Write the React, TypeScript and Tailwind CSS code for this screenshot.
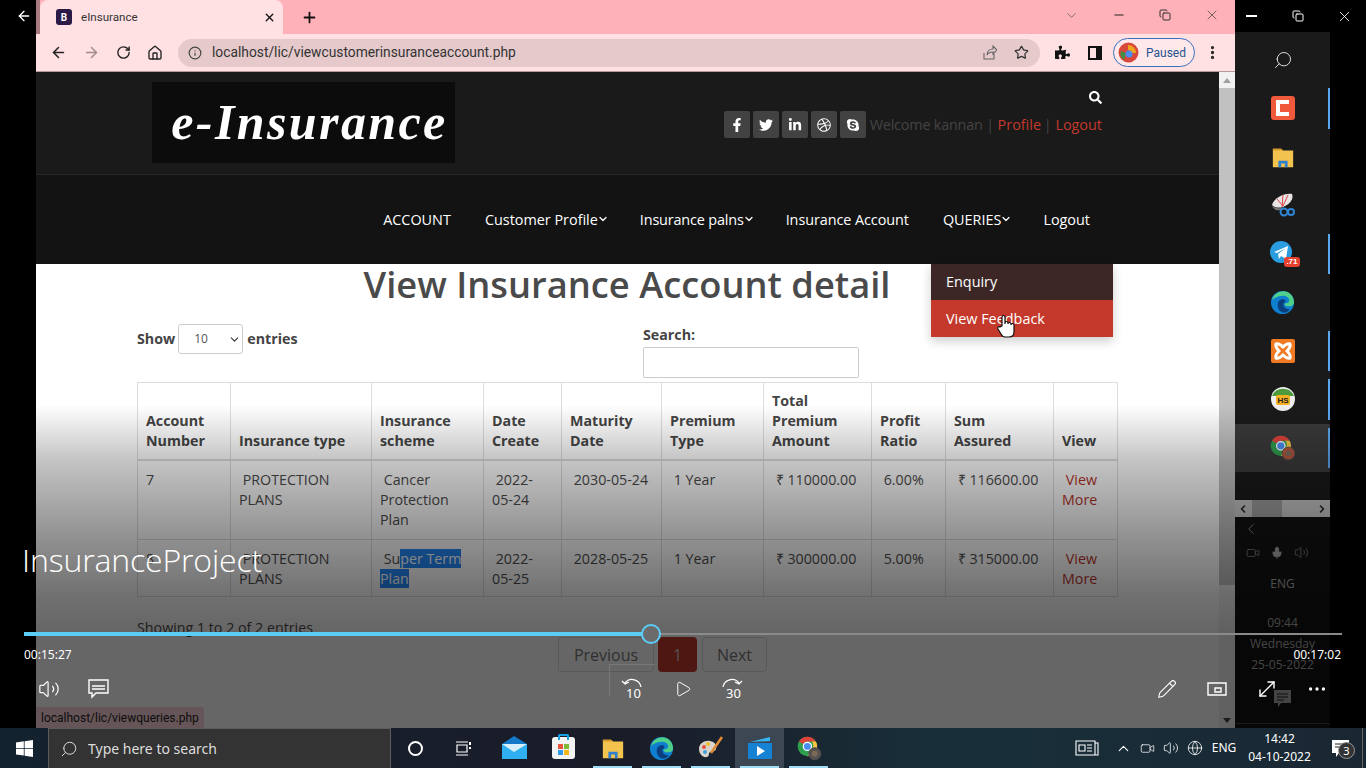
import React from "react";
import { ArrowLeft, ArrowRight, RotateCw, Home, Info, Star, ChevronDown, ChevronLeft, ChevronRight, X, Plus, Minus, Copy, Search, Volume2, Play, Pencil, MoveDiagonal, Ellipsis, ChevronUp, Video, Globe, Mic, EllipsisVertical } from "lucide-react";
import { FaFacebookF, FaTwitter, FaLinkedinIn, FaDribbble, FaSkype, FaSearch, FaPuzzlePiece } from "react-icons/fa";

const open = "font-['Open_Sans',sans-serif]";

function Chrome({ size = 30, badge = "#b8543a" }: { size?: number; badge?: string }) {
  return (
    <svg width={size} height={size} viewBox="0 0 32 32">
      <circle cx="14" cy="14" r="12" fill="#2f9e4f" />
      <path d="M14 2a12 12 0 0 1 10.4 6H14a6 6 0 0 0-5.2 3L3.6 8A12 12 0 0 1 14 2z" fill="#e0413a" />
      <path d="M24.4 8A12 12 0 0 1 14 26l5.2-9a6 6 0 0 0 0-9z" fill="#f6c343" />
      <circle cx="14" cy="14" r="5" fill="#4a8df0" stroke="#fff" strokeWidth="1.5" />
      <circle cx="23" cy="23" r="7.5" fill={badge} stroke="#555" />
      <circle cx="23" cy="23" r="3.5" fill="#7b6a58" />
    </svg>
  );
}
function Edge({ size = 26 }: { size?: number }) {
  return (
    <svg width={size} height={size} viewBox="0 0 26 26">
      <circle cx="13" cy="13" r="12" fill="#0f7fd0" />
      <path d="M2 11C4 3 12 0 18 2c5 2 7 7 7 11 0 3-3 4-6 4-2 0-4-1-4-3 3 0 5-1 5-3 0-3-3-5-7-5-5 0-10 3-11 5z" fill="#4fd08a" />
      <path d="M8 15c0-4 4-6 7-5 2 1 1 3-1 4-1 3 2 6 6 6 1 0 1 1 0 1-3 3-7 3-9 1-2-1-3-4-3-7z" fill="#0b3f7e" />
    </svg>
  );
}
function Folder({ size = 26 }: { size?: number }) {
  return (
    <svg width={size} height={size} viewBox="0 0 26 26">
      <path d="M2 4h9l2 2h11v18H2z" fill="#f2c34e" />
      <path d="M2 4h9l2 2H2z" fill="#d99a2a" />
      <path d="M8 17h10v7h-3v-4h-4v4H8z" fill="#2f80cf" />
    </svg>
  );
}
function Windows() {
  return (
    <svg width="17" height="17" viewBox="0 0 17 17" fill="#fff">
      <path d="M0 2.4 7.8 1.3v6.6H0zM8.6 1.2 17 0v7.9H8.6zM0 8.8h7.8v6.7L0 14.4zM8.6 8.8H17V17l-8.4-1.2z" />
    </svg>
  );
}

const sideIcons: { el: React.ReactNode; mark: boolean; active?: boolean }[] = [
  { el: <div className="w-[24px] h-[24px] rounded-[3px] bg-[#f0593c] flex items-center justify-center"><svg width="16" height="18" viewBox="0 0 16 18"><path d="M14 3H3v12h11" fill="none" stroke="#fff" strokeWidth="4" /></svg></div>, mark: true },
  { el: <Folder size={24} />, mark: false },
  { el: <svg width="24" height="26" viewBox="0 0 24 26"><path d="M1 13C3 6 13 1 21 2c2 5-2 10-9 13-4 1-8 1-11-2z" fill="#e8e4e4" /><path d="M12 3l-1 12M6 7l6 7M17 3l-5 11" stroke="#d44" /><path d="M1 13c3 4 8 4 11 2l-3 3c-4 1-7-1-8-5z" fill="#777" /><circle cx="13" cy="20" r="3.5" fill="none" stroke="#2f86d6" strokeWidth="2" /><circle cx="20" cy="20" r="3" fill="none" stroke="#2f86d6" strokeWidth="2" /></svg>, mark: false },
  { el: <div className="relative w-[26px] h-[26px]"><svg width="24" height="24" viewBox="0 0 24 24"><circle cx="11" cy="11" r="11" fill="#2a9de0" /><path d="M4 11 18 5l-2 13-5-3-2 3-1-5 8-6-9 5z" fill="#fff" /></svg><span className="absolute right-[-4px] bottom-[0px] bg-[#e8402e] rounded-[3px] text-white text-[8px] leading-[10px] px-[2px] font-['Liberation_Sans',sans-serif] font-bold">.71</span></div>, mark: true },
  { el: <Edge size={25} />, mark: false },
  { el: <div className="w-[24px] h-[24px] rounded-[2px] bg-[#ef7a22] flex items-center justify-center"><svg width="18" height="18" viewBox="0 0 18 18"><path d="M2 2c3-1 5 1 7 3 2-2 4-4 7-3 1 3-1 5-3 7 2 2 4 4 3 7-3 1-5-1-7-3-2 2-4 4-7 3-1-3 1-5 3-7C3 7 1 5 2 2z" fill="none" stroke="#fff" strokeWidth="3" /></svg></div>, mark: true },
  { el: <svg width="24" height="24" viewBox="0 0 24 24"><circle cx="12" cy="12" r="12" fill="#eee" /><path d="M1 9a12 12 0 0 1 22 0z" fill="#4c9a3c" /><rect x="5" y="8" width="14" height="10" rx="2" fill="#f5b021" /><text x="12" y="16" fontSize="8" fontWeight="700" textAnchor="middle" fill="#222" fontFamily="Liberation Sans">HS</text></svg>, mark: true },
  { el: <Chrome size={27} />, mark: true, active: true },
];

const head = ["Account Number", "Insurance type", "Insurance scheme", "Date Create", "Maturity Date", "Premium Type", "Total Premium Amount", "Profit Ratio", "Sum Assured", "View"];
const widths = [93, 141, 112, 78, 100, 102, 108, 74, 108, 64];

type Row = React.ReactNode[];
const rows: Row[] = [
  ["7", "\u00a0PROTECTION PLANS", "\u00a0Cancer Protection Plan", "\u00a02022-05-24", "\u00a02030-05-24", "\u00a01 Year", "\u00a0₹ 110000.00", "\u00a06.00%", "\u00a0₹ 116600.00"],
  ["8", "\u00a0PROTECTION PLANS", <>{"\u00a0Su"}<span className="bg-[#2487f5] text-white">per Term Plan</span></>, "\u00a02022-05-25", "\u00a02028-05-25", "\u00a01 Year", "\u00a0₹ 300000.00", "\u00a05.00%", "\u00a0₹ 315000.00"],
];

function Tile({ children, w = "w-[49px]", active, bar }: { children: React.ReactNode; w?: string; active?: boolean; bar?: boolean }) {
  return (
    <div className={`${w} h-full relative flex items-center justify-center ${active ? "bg-[#3d4753]" : ""}`}>
      {children}
      {bar && <div className="absolute bottom-0 left-[5px] right-[5px] h-[2px] bg-[#9fdcf5]" />}
    </div>
  );
}

export default function App() {
  return (
    <div className={`relative w-[1366px] h-[768px] overflow-hidden bg-black flex flex-col ${open}`}>
      <div className="flex h-[728px]">
        {/* left strip */}
        <div className="w-[36px] flex justify-start pl-[16px] pt-[8px]">
          <ArrowLeft size={16} color="#fff" />
        </div>

        {/* browser */}
        <div className="relative w-[1199px] flex flex-col">
          <div className="h-[34px] bg-[#ffb1b9] flex items-end font-['Roboto',sans-serif]">
            <div className="w-[4px] h-[34px] bg-[#a97a80]" />
            <div className="w-[243px] h-[34px] bg-[#ffe0e3] rounded-t-[8px] flex items-center pl-[16px] pr-[7px]">
              <div className="w-[16px] h-[16px] rounded-[3px] bg-[#2b1a48] flex items-center justify-center text-white text-[10px] font-bold mr-[9px]">B</div>
              <span className="text-[11.6px] text-[#333] flex-1 pt-[1px]">eInsurance</span>
              <X size={13} color="#111" strokeWidth={2.5} />
            </div>
            <div className="h-[34px] flex items-center ml-[18px]"><Plus size={17} color="#111" strokeWidth={2.5} /></div>
            <div className="flex-1 h-[34px] flex items-center justify-end pr-[15px] gap-[33px] pb-[4px]">
              <ChevronDown size={15} color="#555" strokeWidth={1.2} />
              <Minus size={14} color="#222" />
              <Copy size={12} color="#333" />
              <X size={16} color="#333" strokeWidth={1} />
            </div>
          </div>
          <div className="h-[38px] bg-[#ffe0e3] border-b border-[#b59a9c] flex items-center pl-[14px] pr-[14px] font-['Roboto',sans-serif]">
            <ArrowLeft size={17} color="#222" strokeWidth={2.2} />
            <ArrowRight size={17} color="#a08a8c" className="ml-[16px]" />
            <RotateCw size={15} color="#222" strokeWidth={2.2} className="ml-[16px]" />
            <Home size={16} color="#222" strokeWidth={2} className="ml-[16px]" />
            <div className="ml-[15px] w-[862px] h-[28px] rounded-full bg-[#e5c9cb] flex items-center pl-[10px] pr-[11px]">
              <Info size={14} color="#444" />
              <span className="ml-[10px] text-[13.8px] text-[#333] flex-1">localhost/lic/viewcustomerinsuranceaccount.php</span>
              <svg width="16" height="16" viewBox="0 0 16 16" fill="none" stroke="#666" strokeWidth="1.1"><path d="M3 8v6h10V9M6 10c0-4 3-6 6-6V1l4 4-4 4V7c-3 0-5 1-6 3z" /></svg>
              <Star size={15} color="#333" className="ml-[17px]" />
            </div>
            <FaPuzzlePiece size={15} color="#111" className="ml-[15px]" />
            <div className="ml-[18px] w-[14px] h-[14px] border-2 border-[#111] border-r-[6px]" />
            <div className="ml-[11px] w-[82px] h-[29px] rounded-full border border-[#3a70c0] bg-[#ffe8ea] flex items-center pl-[4px] gap-[7px]">
              <svg width="21" height="21" viewBox="0 0 21 21"><circle cx="10.5" cy="10.5" r="10" fill="#d8483a" /><path d="M10 3a8 8 0 0 1 8 8h-5a3 3 0 0 0-3-3z" fill="#f1a51f" /><path d="M6 18a8 8 0 0 1-3-9l5 2z" fill="#3f8f45" /><circle cx="11" cy="12" r="3.5" fill="#4c8bf0" /></svg>
              <span className="text-[12px] text-[#27538f]">Paused</span>
            </div>
            <EllipsisVertical size={17} color="#222" strokeWidth={2.6} className="ml-[9px]" />
          </div>

          {/* page */}
          <div className="relative flex-1 flex bg-white">
            <div className="w-[1183px] flex flex-col">
              <div className="h-[103px] bg-[#1a1a1a] border-b border-[#262626] flex items-start pl-[116px] pt-[10px] pr-[117px] justify-between">
                <div className="w-[303px] h-[81px] bg-[#0c0c0c] flex items-center justify-center pb-[2px] pl-[12px]">
                  <span className="font-['Liberation_Serif',serif] italic font-bold text-white text-[50px] leading-none tracking-[2.4px]">e-Insurance</span>
                </div>
                <div className="flex flex-col items-end">
                  <FaSearch size={13} color="#fff" className="mt-[9px]" />
                  <div className="flex items-center mt-[7px] text-[14.4px]">
                    {[FaFacebookF, FaTwitter, FaLinkedinIn, FaDribbble, FaSkype].map((I, i) => (
                      <div key={i} className="w-[26px] h-[27px] mr-[3px] rounded-[2px] bg-[#424242] flex items-center justify-center"><I size={14} color="#fff" /></div>
                    ))}
                    <span className="ml-[1px] text-[#444] tracking-[-0.2px]">Welcome kannan | </span>
                    <span className="text-[#c4392b]">&nbsp;Profile&nbsp;</span>
                    <span className="text-[#444] -ml-[1px]">|&nbsp;</span>
                    <span className="text-[#c4392b]">Logout</span>
                  </div>
                </div>
              </div>
              <div className="h-[89px] bg-[#131313] flex items-center justify-end pr-[129px] gap-[34px] text-white text-[14.4px]">
                <span>ACCOUNT</span>
                <span className="flex items-center">Customer Profile<ChevronDown size={12} strokeWidth={2.5} className="-ml-[1px] -mr-[3px]" /></span>
                <span className="flex items-center tracking-[-0.15px]">Insurance palns<ChevronDown size={12} strokeWidth={2.5} className="-ml-[1px] -mr-[3px]" /></span>
                <span className="tracking-[-0.06px]">Insurance Account</span>
                <span className="flex items-center">QUERIES<ChevronDown size={12} strokeWidth={2.5} className="-ml-[1px] -mr-[3px]" /></span>
                <span>Logout</span>
              </div>
              <div className="flex-1 bg-white pl-[101px] pr-[102px] text-[14.25px] text-[#444]">
                <h1 className="text-center text-[36.3px] leading-[40px] font-semibold text-[#4a4a4a]">View Insurance Account detail</h1>
                <div className="flex h-[58px] mt-[20px]">
                  <div className="w-[506px] flex items-center font-bold h-[30px]">
                    Show
                    <div className="ml-[3px] mr-[4px] w-[65px] h-[30px] border border-[#ccc] rounded-[3px] flex items-center justify-between pl-[15px] pr-[1px] font-normal text-[#555] text-[12px]">10<ChevronDown size={13} color="#333" /></div>
                    entries
                  </div>
                  <div className="mt-[1px]">
                    <div className="font-bold leading-[20px]">Search:</div>
                    <div className="w-[216px] h-[31px] mt-[2px] border border-[#ccc] rounded-[2px]" />
                  </div>
                </div>
                <table className="border-collapse table-fixed w-[980px] leading-[20px]">
                  <colgroup>{widths.map((w, i) => <col key={i} style={{ width: w }} />)}</colgroup>
                  <thead>
                    <tr>
                      {head.map((h) => <th key={h} className="border border-[#ddd] border-b-2 p-[8px] text-left align-bottom font-bold text-[#444]">{h}</th>)}
                    </tr>
                  </thead>
                  <tbody>
                    {rows.map((r, i) => (
                      <tr key={i}>
                        {r.map((c, j) => <td key={j} className={`border border-[#ddd] p-[8px] pt-[9px] align-top text-[#4c4c4c] ${i === 0 ? "pb-[9px]" : "pb-[7px]"}`}>{c}</td>)}
                        <td className={`border border-[#ddd] pl-[8px] pr-[20px] pt-[9px] align-top text-right text-[#b9332a] ${i === 0 ? "pb-[9px]" : "pb-[7px]"}`}>View More</td>
                      </tr>
                    ))}
                  </tbody>
                </table>
                <div className="mt-[21px] leading-[20px] text-[#4c4c4c]">Showing 1 to 2 of 2 entries</div>
                <div className="flex ml-[421px] -mt-[1px] gap-[4px] text-[16px]">
                  <div className="w-[96px] h-[35px] border border-[#ddd] rounded-[4px] flex items-center justify-center text-[#777]">Previous</div>
                  <div className="w-[39px] h-[35px] rounded-[4px] bg-[#c4392b] flex items-center justify-center text-[#ccc]">1</div>
                  <div className="w-[65px] h-[35px] border border-[#ddd] rounded-[4px] ml-[1px] flex items-center justify-center text-[#777]">Next</div>
                </div>
              </div>
            </div>
            {/* scrollbar */}
            <div className="w-[16px] bg-[#f1f1f1] flex flex-col items-center">
              <div className="h-[16px] flex items-center"><div className="border-x-[4px] border-x-transparent border-b-[5px] border-b-[#a0a0a0]" /></div>
              <div className="w-full h-[497px] bg-[#c1c1c1]" />
              <div className="flex-1" />
              <div className="h-[16px] flex items-center"><div className="border-x-[4px] border-x-transparent border-t-[5px] border-t-[#444]" /></div>
            </div>

            {/* dropdown */}
            <div className="absolute left-[895px] top-[192px] w-[182px] text-white text-[14.4px] shadow-[0_4px_10px_rgba(0,0,0,0.2)]">
              <div className="h-[36px] bg-[#3d2726] flex items-center pl-[15px]">Enquiry</div>
              <div className="h-[37px] bg-[#c4392b] flex items-center pl-[15px]">View Feedback</div>
            </div>
            <div className="absolute left-[960px] top-[242px]">
              <svg width="20" height="26" viewBox="0 0 20 26"><path d="M6 12V3a1.5 1.5 0 0 1 3 0v7l0-1a1.5 1.5 0 0 1 3 0v1a1.5 1.5 0 0 1 3 0v1a1.5 1.5 0 0 1 3 0v7c0 3-2 5-5 5H9c-2 0-3-1-4-3l-3-5c-1-2 1-3 2-2z" fill="#fff" stroke="#111" strokeWidth="1.2" /></svg>
            </div>
            {/* status bubble */}
            <div className="absolute left-0 bottom-0 h-[21px] w-[168px] bg-[#ffd5db] rounded-tr-[3px] flex items-center pl-[5px] text-[12px] text-[#222] font-['Roboto',sans-serif]">localhost/lic/viewqueries.php</div>
          </div>
        </div>

        {/* right panel */}
        <div className="w-[95px] flex flex-col">
          <div className="h-[32px] w-[131px] bg-black flex items-center relative z-10">
            <div className="ml-[11px] w-[11px] h-[2px] bg-white" />
            <Copy size={12} color="#fff" className="ml-[35px]" />
            <X size={17} color="#fff" strokeWidth={1.2} className="ml-[32px]" />
          </div>
          <div className="h-[468px] bg-[#1a1a1a] flex flex-col">
            <div className="h-[52px] flex items-center justify-center pt-[4px]"><Search size={20} color="#ddd" strokeWidth={1.2} className="-scale-x-100" /></div>
            {sideIcons.map((s, i) => (
              <div key={i} className={`h-[48.5px] relative flex items-center justify-center ${s.active ? "bg-[#3a3a3a]" : ""}`}>
                {s.el}
                {s.mark && <div className="absolute right-0 top-[4px] bottom-[4px] w-[2px] bg-[#5aa8f0]" />}
              </div>
            ))}
          </div>
          <div className="h-[17px] bg-[#c9c9c9] flex items-center justify-between px-[2px] relative">
            <ChevronLeft size={12} color="#222" strokeWidth={3} />
            <div className="absolute left-[17px] w-[30px] h-full bg-[#a0a0a0]" />
            <ChevronRight size={12} color="#222" strokeWidth={3} />
          </div>
          <div className="flex-1 bg-[#121212] flex flex-col items-center text-[#aaa] text-[12px] relative">
            <div className="w-full pl-[7px] pt-[3px]"><ChevronLeft size={18} strokeWidth={1} /></div>
            <div className="flex items-center justify-center gap-[10px] mt-[7px] -ml-[10px]">
              <Video size={14} strokeWidth={1} /><Mic size={14} fill="#aaa" strokeWidth={1} /><Volume2 size={15} strokeWidth={1} />
            </div>
            <div className="mt-[15px]">ENG</div>
            <div className="mt-[21px]">09:44</div>
            <div className="mt-[3px]">Wednesday</div>
            <div className="mt-[3px]">25-05-2022</div>
            <svg className="mt-[16px]" width="18" height="18" viewBox="0 0 18 18" fill="#aaa"><path d="M0 0h17v13H7l-3 4v-4H0z" /><path d="M3 4h11M3 7h11M3 10h7" stroke="#222" /></svg>
            <div className="absolute bottom-[4px] w-full h-[1px] bg-[#444]" />
          </div>
        </div>
        <div className="w-[36px]" />
      </div>

      {/* taskbar */}
      <div className="h-[40px] bg-[linear-gradient(90deg,#13222f,#1a1c28_45%,#18303a_70%,#1a2733)] flex items-center text-white font-['Noto_Sans',sans-serif] relative">
        <div className="w-[48px] h-full flex items-center justify-center"><Windows /></div>
        <div className="w-[343px] h-full bg-[#333] border border-[#5c5c5c] border-b-0 flex items-center pl-[11px] gap-[10px]">
          <Search size={18} color="#ddd" strokeWidth={1.3} className="-scale-x-100" />
          <span className="text-[14px] text-[#ddd]">Type here to search</span>
        </div>
        <div className="w-[49px] h-full flex items-center justify-center"><div className="w-[15px] h-[15px] rounded-full border-2 border-white" /></div>
        <div className="w-[48px] h-full flex items-center justify-center">
          <svg width="16" height="15" viewBox="0 0 16 15" fill="none" stroke="#fff" strokeWidth="1.2"><path d="M1 4h10v7H1zM0 1h12M0 14h12" /><path d="M14 1v3M14 6v2" strokeWidth="2" /></svg>
        </div>
        <div className="w-[2px]" />
        <Tile>
          <svg width="25" height="24" viewBox="0 0 25 24"><path d="M0 8 12 0l13 8v15H0z" fill="#1479c9" /><path d="M0 8h25v15H0z" fill="#30b0f0" /><path d="M0 8l12 8 13-8z" fill="#d9f0fb" /></svg>
        </Tile>
        <Tile>
          <div className="relative w-[23px] h-[22px] rounded-[3px] bg-[#f3f3f3] flex items-center justify-center">
            <div className="absolute -top-[3px] left-[6px] w-[11px] h-[6px] border-2 border-b-0 border-[#18a0e0] rounded-t-[2px]" />
            <div className="grid grid-cols-2 gap-[1px] mt-[2px]">
              <div className="w-[5px] h-[5px] bg-[#e8533f]" /><div className="w-[5px] h-[5px] bg-[#7fb93a]" /><div className="w-[5px] h-[5px] bg-[#2e9ae8]" /><div className="w-[5px] h-[5px] bg-[#f3b51c]" />
            </div>
          </div>
        </Tile>
        <Tile bar><Folder size={24} /></Tile>
        <Tile bar><Edge size={25} /></Tile>
        <Tile bar>
          <svg width="26" height="26" viewBox="0 0 26 26"><path d="M1 14C1 8 7 5 12 6c5 1 7 4 6 8-1 3-4 2-6 3-2 1 0 4-3 5-4 1-8-3-8-8z" fill="#d8d4cc" /><circle cx="6" cy="12" r="2" fill="#e8503f" /><circle cx="10" cy="9" r="2" fill="#f0c02a" /><circle cx="7" cy="17" r="2" fill="#3f9ee0" /><path d="M13 18 24 2" stroke="#e08a34" strokeWidth="2.5" /></svg>
        </Tile>
        <Tile active bar>
          <svg width="24" height="24" viewBox="0 0 24 24"><path d="M2 6 22 1v4z" fill="#35b6f0" /><rect x="0" y="7" width="24" height="16" fill="#1682d4" /><path d="M9 10l8 5-8 5z" fill="#fff" /></svg>
        </Tile>
        <Tile bar><Chrome size={26} badge="#55524e" /></Tile>

        <div className="flex-1" />
        <div className="w-[24px] mr-[12px] flex justify-center">
          <svg width="24" height="16" viewBox="0 0 24 16" fill="none" stroke="#fff" strokeWidth="1.1"><path d="M1 1h19v14H1zM20 3h3v12h-3M4 5h6v6H4zM12 5h5M12 8h5M12 11h5" /></svg>
        </div>
        <div className="w-[24px] flex justify-center"><ChevronUp size={17} color="#fff" strokeWidth={1.5} /></div>
        <div className="w-[24px] flex justify-center"><Video size={15} color="#fff" strokeWidth={1.2} /></div>
        <div className="w-[24px] flex justify-center"><Volume2 size={16} color="#fff" strokeWidth={1.2} /></div>
        <div className="w-[24px] flex justify-center"><Globe size={16} color="#fff" strokeWidth={1.2} /></div>
        <div className="w-[34px] text-center text-[12px]">ENG</div>
        <div className="w-[77px] text-center text-[12px] leading-[18px]"><div>14:42</div><div>04-10-2022</div></div>
        <div className="w-[44px] h-full flex items-center justify-center relative pl-[1px]">
          <svg width="17" height="17" viewBox="0 0 17 17" fill="#fff"><path d="M0 0h17v13H7l-3 4v-4H0z" /><path d="M3 4h11M3 7h11" stroke="#222" /></svg>
          <span className="absolute left-[20px] top-[14px] w-[17px] h-[17px] rounded-full bg-[#333] border border-[#999] text-[11px] leading-[15px] text-center">3</span>
        </div>
        <div className="w-[4px] h-full border-l border-[#666]" />
      </div>

      {/* video overlay */}
      <div className="absolute left-0 top-0 w-full h-[728px] pointer-events-none bg-[linear-gradient(180deg,rgba(0,0,0,0)_405px,rgba(0,0,0,0.23)_460px,rgba(0,0,0,0.44)_540px,rgba(0,0,0,0.56)_597px,rgba(0,0,0,0.6)_630px)]" />
      <div className="absolute left-[22px] top-[538px] text-white text-[32px] leading-[44px] font-light font-['Open_Sans',sans-serif] tracking-[-0.15px]">InsuranceProject</div>
      <div className="absolute left-[24px] top-[633px] w-[1318px] h-[2px] bg-[#8a8a8a]" />
      <div className="absolute left-[24px] top-[632px] w-[627px] h-[4px] bg-[#5ccdf5]" />
      <div className="absolute left-[641px] top-[624px] w-[20px] h-[20px] rounded-full border-2 border-[#5ccdf5] bg-[#6b6b6b]" />
      <div className="absolute left-[24px] top-[647px] text-white text-[12px] leading-[16px] font-['Noto_Sans',sans-serif]">00:15:27</div>
      <div className="absolute right-[25px] top-[647px] text-white text-[12px] leading-[16px] font-['Noto_Sans',sans-serif]">00:17:02</div>
      <div className="absolute left-[609px] top-[664px] w-[46px] h-[32px] border-l border-t border-[#8a8a8a]/50" />

      <div className="absolute left-[38px] top-[679px] w-[1305px] h-[20px] flex items-center text-white">
        <Volume2 size={22} strokeWidth={1.3} />
        <svg className="ml-[28px]" width="22" height="20" viewBox="0 0 22 20" fill="none" stroke="#fff" strokeWidth="1.4"><path d="M1 1h19v13H8l-4 4v-4H1z" /><path d="M4 7h13M4 10h13" /></svg>
        <div className="ml-[511px] relative w-[24px] h-[24px]">
          <svg width="22" height="12" viewBox="0 0 22 12" fill="none" stroke="#fff" strokeWidth="1.3"><path d="M4 6a9 9 0 0 1 16 4M1 4l3 3 4-2" /></svg>
          <span className="absolute left-[5px] top-[8px] text-[13px] leading-[16px] font-['Noto_Sans',sans-serif]">10</span>
        </div>
        <Play size={18} strokeWidth={1.3} className="ml-[29px]" />
        <div className="ml-[29px] relative w-[24px] h-[24px]">
          <svg width="22" height="12" viewBox="0 0 22 12" fill="none" stroke="#fff" strokeWidth="1.3"><path d="M18 6a9 9 0 0 0-16 4M21 4l-3 3-4-2" /></svg>
          <span className="absolute left-[5px] top-[8px] text-[13px] leading-[16px] font-['Noto_Sans',sans-serif]">30</span>
        </div>
        <Pencil size={20} strokeWidth={1.3} className="ml-[412px]" />
        <svg className="ml-[30px]" width="20" height="14" viewBox="0 0 20 14" fill="none" stroke="#fff" strokeWidth="1.4"><path d="M1 1h18v12H1z" /><path d="M8 6h6v4H8z" /></svg>
        <MoveDiagonal size={24} strokeWidth={1.4} className="ml-[28px]" />
        <Ellipsis size={22} strokeWidth={1.6} className="ml-[27px]" />
      </div>
    </div>
  );
}
